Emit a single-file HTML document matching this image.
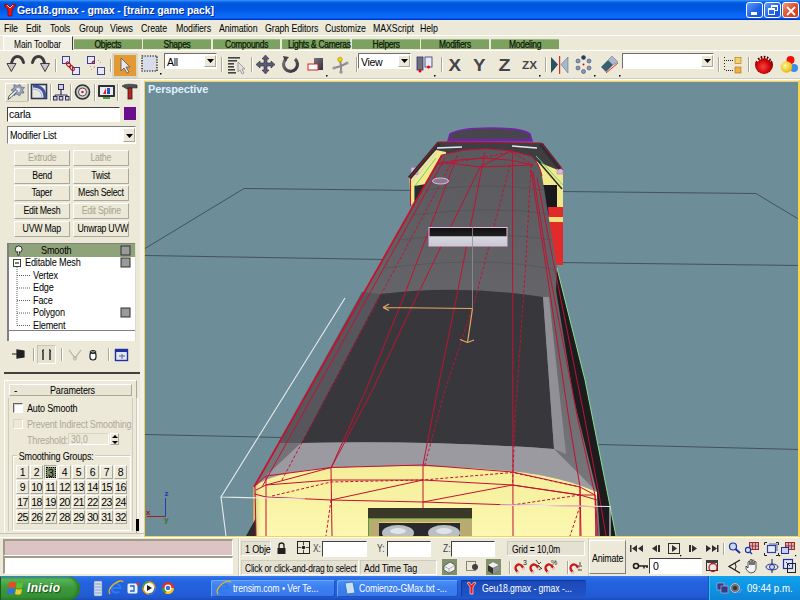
<!DOCTYPE html>
<html><head><meta charset="utf-8">
<style>
*{margin:0;padding:0;box-sizing:border-box}
html,body{width:800px;height:600px;overflow:hidden;background:#ECE9D8;font-family:"Liberation Sans",sans-serif;font-size:10px;color:#000}
.a{position:absolute;white-space:nowrap}
svg{position:absolute;overflow:visible}
#title{left:0;top:0;width:800px;height:20px;background:linear-gradient(#4A9CFF 0%,#1A78F4 5%,#0058DE 15%,#0056E0 45%,#0866F4 72%,#0A6EFA 88%,#0040D8 95%,#0030C0 100%)}
#ttxt{left:17px;top:4px;color:#fff;font-weight:bold;font-size:10.5px;letter-spacing:-0.1px;text-shadow:1px 1px 0 #0A2A90}
.tb{top:2px;width:17px;height:16px;border:1px solid #fff;border-radius:3px;background:linear-gradient(135deg,#5C9BFF,#1F5FE8 60%,#1A52D8)}
#menu div{position:absolute;top:22px;font-size:10.5px;letter-spacing:-0.1px;color:#000;white-space:nowrap;transform:scaleX(.84);transform-origin:0 0}
.tab{position:absolute;white-space:nowrap;top:39px;height:10px;background:#7DA161;color:#0A1806;-webkit-text-stroke:0.25px #0A1806;font-size:10px;letter-spacing:-0.3px;text-align:center;line-height:10px;border-top:1px solid #9CBB83}
.sep{position:absolute;width:2px;border-left:1px solid #ACA899;border-right:1px solid #fff}
.btn{position:absolute;white-space:nowrap;background:#ECE9D8;border:1px solid;border-color:#fff #ACA899 #ACA899 #fff;text-align:center;font-size:10px;letter-spacing:-0.3px}
.field{position:absolute;background:#fff;border:1px solid;border-color:#716F64 #fff #fff #716F64}
</style></head><body>
<!-- TITLE BAR -->
<div id="title" class="a"></div>
<svg style="left:3px;top:3px" width="14" height="14" viewBox="0 0 14 14"><path d="M1,2 L4,1 L7,4 L10,1 L13,2 L9,7 L9,13 L5,13 L5,7 Z" fill="#F01010" stroke="#600" stroke-width="0.6"/><path d="M4,2 L7,5 L10,2" fill="none" stroke="#fff" stroke-width="0.8"/></svg>
<div id="ttxt" class="a">Geu18.gmax - gmax - [trainz game pack]</div>
<div class="a tb" style="left:746px"><div class="a" style="left:4px;top:9px;width:6px;height:3px;background:#fff"></div></div>
<div class="a tb" style="left:764px"><div class="a" style="left:6px;top:2px;width:7px;height:6px;border:1px solid #fff;border-top-width:2px"></div><div class="a" style="left:3px;top:5px;width:7px;height:7px;border:1px solid #fff;border-top-width:2px;background:#2A6AF0"></div></div>
<div class="a tb" style="left:782px;background:linear-gradient(135deg,#F29A80,#E0502E 50%,#C83A1A)"><svg style="left:3px;top:3px" width="10" height="10"><path d="M1,1 L9,9 M9,1 L1,9" stroke="#fff" stroke-width="1.8"/></svg></div>

<!-- MENU -->
<div id="menu">
<div style="left:4px">File</div><div style="left:26px">Edit</div><div style="left:50px">Tools</div><div style="left:79px">Group</div><div style="left:110px">Views</div><div style="left:141px">Create</div><div style="left:176px">Modifiers</div><div style="left:219px">Animation</div><div style="left:265px">Graph Editors</div><div style="left:325px">Customize</div><div style="left:373px">MAXScript</div><div style="left:420px">Help</div>
</div>
<div class="a" style="left:0;top:35px;width:800px;height:1px;background:#fff"></div>


<!-- TABS -->
<div class="a" style="left:3px;top:36px;width:70px;height:15px;background:#F2F0E4;border:1px solid #fff;border-right:1px solid #404040;border-bottom:none"></div>
<div class="a" style="left:14px;top:38px;font-size:10.5px;letter-spacing:-0.1px;transform:scaleX(.8);transform-origin:0 0">Main Toolbar</div>
<div class="tab" style="left:74px;width:68px"><span style="display:inline-block;transform:scaleX(.84)">Objects</span></div>
<div class="tab" style="left:143px;width:68px"><span style="display:inline-block;transform:scaleX(.84)">Shapes</span></div>
<div class="tab" style="left:213px;width:67px"><span style="display:inline-block;transform:scaleX(.84)">Compounds</span></div>
<div class="tab" style="left:282px;width:68px"><span style="display:inline-block;transform:scaleX(.84)">Lights &amp; Cameras</span></div>
<div class="tab" style="left:352px;width:68px"><span style="display:inline-block;transform:scaleX(.84)">Helpers</span></div>
<div class="tab" style="left:421px;width:68px"><span style="display:inline-block;transform:scaleX(.84)">Modifiers</span></div>
<div class="tab" style="left:491px;width:68px"><span style="display:inline-block;transform:scaleX(.84)">Modeling</span></div>
<div class="a" style="left:0;top:50px;width:800px;height:1px;background:#fff"></div>
<div class="a" style="left:0;top:78px;width:800px;height:1px;background:#D0CCBA"></div>
<div class="a" style="left:0;top:79px;width:800px;height:1px;background:#fff"></div>
<!--TOOLBAR-->
<svg style="left:0;top:50px" width="800" height="30" viewBox="0 50 800 30">
<defs>
<linearGradient id="gArr" x1="0" y1="0" x2="0" y2="1"><stop offset="0" stop-color="#5A5A5A"/><stop offset="0.5" stop-color="#9A9A9A"/><stop offset="1" stop-color="#C8C8C8"/></linearGradient>
<linearGradient id="gMet" x1="0" y1="0" x2="1" y2="1"><stop offset="0" stop-color="#7A7A80"/><stop offset="1" stop-color="#2E2E34"/></linearGradient>
<radialGradient id="gRed" cx="0.45" cy="0.6" r="0.6"><stop offset="0" stop-color="#FF4040"/><stop offset="0.7" stop-color="#C00000"/><stop offset="1" stop-color="#700000"/></radialGradient>
<radialGradient id="gYel" cx="0.4" cy="0.4" r="0.6"><stop offset="0" stop-color="#FFF8A0"/><stop offset="1" stop-color="#E8B800"/></radialGradient>
</defs>
<!-- undo -->
<path d="M23.5,62.5 Q22,56.5 17.5,56.5 Q13,56.5 11.5,63" fill="none" stroke="#3A3A40" stroke-width="3" stroke-linecap="round"/>
<path d="M7,63.5 L16,63.5 L11.3,71.5 Z" fill="#C8C8CC" stroke="#3A3A40" stroke-width="1"/>
<!-- redo -->
<path d="M32.5,62.5 Q34,56.5 38.5,56.5 Q43,56.5 44.5,63" fill="none" stroke="#3A3A40" stroke-width="3" stroke-linecap="round"/>
<path d="M40.5,63.5 L49.5,63.5 L45,71.5 Z" fill="#C8C8CC" stroke="#3A3A40" stroke-width="1"/>
<rect x="55" y="59" width="1" height="13" fill="#ACA899"/><rect x="56" y="59" width="1" height="13" fill="#fff"/>
<!-- link -->
<rect x="62.5" y="56.5" width="7" height="7" fill="#E8E8F8" stroke="#404090" stroke-width="1"/><rect x="72.5" y="67.5" width="7" height="7" fill="#E8E8F8" stroke="#404090" stroke-width="1"/>
<ellipse cx="68.5" cy="64.5" rx="3" ry="1.6" transform="rotate(50 68.5 64.5)" fill="none" stroke="#C01020" stroke-width="1.1"/><ellipse cx="72" cy="68" rx="3" ry="1.6" transform="rotate(50 72 68)" fill="none" stroke="#C01020" stroke-width="1.1"/>
<!-- unlink -->
<rect x="87.5" y="56.5" width="7" height="7" fill="#E8E8F8" stroke="#404090" stroke-width="1"/><rect x="97.5" y="67.5" width="7" height="7" fill="#E8E8F8" stroke="#404090" stroke-width="1"/>
<path d="M92,63 Q93,61.5 94.5,61" stroke="#C01020" stroke-width="1.4" fill="none"/>
<path d="M98,61 L99,60 M100,62 L101,62.5 M90,67 L91,66 M94,66 L94.5,68 M91,69 L92,70" stroke="#D08080" stroke-width="0.9"/>
<rect x="110" y="59" width="1" height="13" fill="#ACA899"/><rect x="111" y="59" width="1" height="13" fill="#fff"/>
<!-- select (pressed orange) -->
<rect x="113" y="54" width="24" height="23" fill="#ECE9D8" stroke="#C8C4B0"/>
<rect x="114" y="55" width="22" height="21" fill="#E39A36"/>
<path d="M121,58 L121,71 L124,68 L127,73 L129,72 L126,67 L130,67 Z" fill="#E8E8E8" stroke="#555" stroke-width="0.8"/>
<!-- region select -->
<rect x="142" y="56" width="15" height="15" fill="#D8DCEA" stroke="#000" stroke-width="1.2" stroke-dasharray="1.3,1.3"/>
<rect x="160" y="73" width="1.5" height="1.5" fill="#000"/>
<rect x="221" y="57" width="1" height="15" fill="#ACA899"/><rect x="222" y="57" width="1" height="15" fill="#fff"/>
<!-- select by name -->
<g fill="#444"><rect x="228" y="57" width="12" height="1.6"/><rect x="228" y="60" width="9" height="1.6"/><rect x="228" y="63" width="6" height="1.6"/><rect x="228" y="66" width="6" height="1.6"/><rect x="228" y="69" width="7" height="1.6"/><rect x="228" y="72" width="8" height="1.6"/></g>
<path d="M238,62 L238,72 L240,70 L242,74 L244,73 L242,69 L245,69 Z" fill="#E0E0E0" stroke="#777" stroke-width="0.6"/>
<rect x="251" y="57" width="1" height="15" fill="#ACA899"/><rect x="252" y="57" width="1" height="15" fill="#fff"/>
<!-- move -->
<path d="M265.5,55 L269,59 L267,59 L267,63 L271,63 L271,61 L275,64.5 L271,68 L271,66 L267,66 L267,70 L269,70 L265.5,74 L262,70 L264,70 L264,66 L260,66 L260,68 L256,64.5 L260,61 L260,63 L264,63 L264,59 L262,59 Z" fill="#5A5A70" stroke="#2A2A40" stroke-width="0.6"/>
<!-- rotate -->
<path d="M286,59 A7,7 0 1 0 295,59" fill="none" stroke="url(#gMet)" stroke-width="3.2"/><path d="M283,56 L289,57 L285,62 Z" fill="#444"/>
<!-- scale -->
<rect x="314" y="58" width="9" height="12" fill="url(#gMet)"/><rect x="308" y="64" width="10" height="6" fill="#fff" stroke="#D02020"/>
<rect x="326" y="75" width="1.5" height="1.5" fill="#000"/>
<!-- pivot -->
<path d="M341,66 L340,60 M341,66 L334,68 M341,66 L347,63 M341,66 L341,72" stroke="#8A8A90" stroke-width="2"/><circle cx="340" cy="59.5" r="2.3" fill="#F0D000" stroke="#A08000" stroke-width="0.5"/><circle cx="341" cy="72" r="1.8" fill="#9A9AA0"/><circle cx="334" cy="68" r="1.6" fill="#9A9AA0"/><circle cx="347" cy="63" r="1.6" fill="#9A9AA0"/>
<rect x="356" y="57" width="1" height="15" fill="#ACA899"/><rect x="357" y="57" width="1" height="15" fill="#fff"/>
<!-- pivot center -->
<rect x="417" y="57" width="6" height="13" fill="#707078" stroke="#303080" stroke-width="0.8"/><rect x="425" y="57" width="7" height="10" fill="#E8E8F0" stroke="#303080" stroke-width="0.8"/>
<circle cx="420" cy="71" r="1.5" fill="#F00000"/><circle cx="428.5" cy="67" r="1.5" fill="#F00000"/>
<rect x="434" y="75" width="1.5" height="1.5" fill="#000"/>
<rect x="441" y="57" width="1" height="15" fill="#ACA899"/><rect x="442" y="57" width="1" height="15" fill="#fff"/>
<!-- X Y Z ZX -->
<text x="448.5" y="71" font-family="Liberation Sans" font-weight="bold" font-size="17" fill="#44444C" textLength="12.5" lengthAdjust="spacingAndGlyphs">X</text>
<text x="473" y="71" font-family="Liberation Sans" font-weight="bold" font-size="17" fill="#44444C" textLength="12.5" lengthAdjust="spacingAndGlyphs">Y</text>
<text x="498.5" y="71" font-family="Liberation Sans" font-weight="bold" font-size="17" fill="#44444C" textLength="12" lengthAdjust="spacingAndGlyphs">Z</text>
<text x="522" y="68.5" font-family="Liberation Sans" font-weight="bold" font-size="10.5" fill="#44444C" textLength="15" lengthAdjust="spacingAndGlyphs">ZX</text>
<rect x="539" y="75" width="1.5" height="1.5" fill="#000"/>
<rect x="545" y="57" width="1" height="15" fill="#ACA899"/><rect x="546" y="57" width="1" height="15" fill="#fff"/>
<!-- mirror -->
<path d="M551,57 L558,64.5 L551,73 Z" fill="#2A5060"/><path d="M568,57 L561,64.5 L568,73 Z" fill="#A8B8C8" stroke="#506070" stroke-width="0.5"/><rect x="559" y="56" width="1.2" height="18" fill="#D03030"/>
<!-- array -->
<g fill="#8A98B8" stroke="#3A4A6A" stroke-width="0.6"><circle cx="583.5" cy="57.5" r="2" fill="#2A3A5A"/><circle cx="578" cy="61" r="2"/><circle cx="589" cy="61" r="2"/><circle cx="578" cy="68" r="2"/><circle cx="589" cy="68" r="2"/><circle cx="583.5" cy="71.5" r="2"/></g><circle cx="583.5" cy="64.5" r="1" fill="#E00000"/>
<rect x="594" y="75" width="1.5" height="1.5" fill="#000"/>
<!-- align -->
<path d="M601,67 L608,60 L613,65 L606,72 Z" fill="#3A6070"/><path d="M608,60 L612,56 L618,62 L613,65 Z" fill="#A8B8D0" stroke="#607080" stroke-width="0.5"/><path d="M606,73 L618,63" stroke="#E03030" stroke-width="1"/>
<rect x="619" y="75" width="1.5" height="1.5" fill="#000"/>
<rect x="718" y="57" width="1" height="15" fill="#ACA899"/><rect x="719" y="57" width="1" height="15" fill="#fff"/>
<!-- schematic -->
<g fill="#222"><rect x="724" y="57" width="1" height="1"/><rect x="724" y="60" width="1" height="1"/><rect x="726" y="60" width="1" height="1"/><rect x="728" y="60" width="1" height="1"/><rect x="730" y="60" width="1" height="1"/><rect x="732" y="60" width="1" height="1"/><rect x="724" y="63" width="1" height="1"/><rect x="724" y="66" width="1" height="1"/><rect x="724" y="69" width="1" height="1"/><rect x="726" y="70" width="1" height="1"/><rect x="728" y="70" width="1" height="1"/><rect x="730" y="70" width="1" height="1"/><rect x="732" y="70" width="1" height="1"/></g>
<rect x="735" y="57.5" width="6" height="6" fill="#F8D060" stroke="#A07020" stroke-width="0.6"/><rect x="735" y="67" width="6" height="6" fill="#F0B040" stroke="#A07020" stroke-width="0.6"/>
<rect x="748" y="57" width="1" height="15" fill="#ACA899"/><rect x="749" y="57" width="1" height="15" fill="#fff"/>
<!-- render ball -->
<circle cx="764" cy="65" r="9" fill="url(#gRed)"/><path d="M757,61 Q764,53 771,61" fill="none" stroke="#fff" stroke-width="2.4" stroke-dasharray="1.6,1.6"/><path d="M758,59 Q764,54 770,59" fill="none" stroke="#111" stroke-width="1.3" stroke-dasharray="1.6,1.6"/>
<!-- color balls -->
<circle cx="790.5" cy="60" r="4" fill="#F01010"/><circle cx="794" cy="68" r="4" fill="#3A8AF0"/><circle cx="786.5" cy="67" r="5.8" fill="url(#gYel)"/>
</svg>
<!-- dropdowns -->
<div class="field" style="left:164px;top:53px;width:53px;height:16px"><div class="a" style="left:2px;top:2px;font-size:10.5px;letter-spacing:-.3px">All</div></div>
<div class="btn" style="left:204px;top:55px;width:12px;height:12px"><svg style="left:2px;top:3px" width="7" height="4"><path d="M0,0 L7,0 L3.5,4 Z" fill="#000"/></svg></div>
<div class="field" style="left:358px;top:53px;width:53px;height:16px"><div class="a" style="left:2px;top:2px;font-size:10.5px;letter-spacing:-.3px">View</div></div>
<div class="btn" style="left:398px;top:55px;width:12px;height:12px"><svg style="left:2px;top:3px" width="7" height="4"><path d="M0,0 L7,0 L3.5,4 Z" fill="#000"/></svg></div>
<div class="field" style="left:622px;top:53px;width:92px;height:16px"></div>
<div class="btn" style="left:701px;top:55px;width:12px;height:12px"><svg style="left:2px;top:3px" width="7" height="4"><path d="M0,0 L7,0 L3.5,4 Z" fill="#000"/></svg></div>

<!--PANEL-->
<div class="a" style="left:140px;top:80px;width:4px;height:458px;background:#F4F2E8"></div>
<div class="a" style="left:5px;top:83px;width:23px;height:19px;border:1px solid;border-color:#fff #C8C4B0 #C8C4B0 #fff;background:#E6E3D2"></div>
<div class="sep" style="left:28px;top:84px;height:17px"></div>
<div class="sep" style="left:50px;top:84px;height:17px"></div>
<div class="sep" style="left:70px;top:84px;height:17px"></div>
<div class="sep" style="left:94px;top:84px;height:17px"></div>
<div class="sep" style="left:117px;top:84px;height:17px"></div>
<svg style="left:0;top:80px" width="144" height="24" viewBox="0 80 144 24">
<!-- create wand -->
<path d="M14,84.5 L17,86 L20,84.5 L21,87 L24.5,87.5 L22.5,90 L24,93 L21,93 L19.5,96 L17,94 L14,95.5 L14,92 L11,90 L14,88 Z" fill="#9AA4B8" stroke="#5A6478" stroke-width="0.7"/>
<circle cx="18" cy="90" r="2" fill="#E8ECF0"/>
<path d="M8,99.5 L9,96 L16,89.5 L17.5,91 L11,97.5 Z" fill="#F0F0F4" stroke="#303848" stroke-width="0.8"/>
<!-- modify -->
<rect x="31.5" y="84.5" width="15" height="14" fill="#E8E8E0" stroke="#303850" stroke-width="1.6"/>
<path d="M33,86 Q45,86 45,98" fill="none" stroke="#4050A0" stroke-width="3"/><path d="M33,89 Q42,89 42,98" fill="none" stroke="#A0B0E0" stroke-width="1"/>
<!-- hierarchy -->
<rect x="58.5" y="84.5" width="5" height="5" fill="#D0D0E0" stroke="#303060"/><path d="M61,90 L61,95 M55,95 L67,95 M55,95 L55,97 M67,95 L67,97" stroke="#303060" stroke-width="1.2"/>
<rect x="53.5" y="96.5" width="3.5" height="3.5" fill="#D0D0E0" stroke="#303060"/><rect x="59.3" y="96.5" width="3.5" height="3.5" fill="#D0D0E0" stroke="#303060"/><rect x="65.5" y="96.5" width="3.5" height="3.5" fill="#D0D0E0" stroke="#303060"/>
<!-- motion -->
<circle cx="82.5" cy="92" r="7" fill="#C8C8C8" stroke="#303030" stroke-width="1.6"/><circle cx="82.5" cy="92" r="4" fill="#F0F0F0" stroke="#505050"/><circle cx="82.5" cy="92" r="1.3" fill="#E02020"/>
<!-- display -->
<rect x="98" y="85" width="17" height="12" rx="1" fill="#303030"/><rect x="100" y="87" width="13" height="8" fill="#E8ECF8"/><path d="M103,94 L106,88 L106,94 Z" fill="#E02020"/><rect x="107" y="88" width="3" height="6" fill="#3050C0"/><rect x="103" y="97" width="7" height="2" fill="#40A040"/>
<!-- utilities hammer -->
<path d="M122,86 Q126,83 137,85 L137,88 Q130,87 127,89 Z" fill="#505058" stroke="#202020" stroke-width="0.6"/><rect x="128" y="88" width="4" height="11" fill="#C02020" stroke="#202020" stroke-width="0.8"/>
</svg>
<div class="field" style="left:7px;top:107px;width:113px;height:15px;border-color:#404040 #fff #fff #404040"><div class="a" style="left:1px;top:0px;font-size:10.5px;letter-spacing:-.2px">carla</div></div>
<div class="a" style="left:124px;top:107px;width:12px;height:13px;background:#6A0E8E"></div>
<div class="field" style="left:7px;top:126px;width:129px;height:18px;border-color:#808080 #fff #fff #808080"><div class="a" style="left:2px;top:2px;font-size:10.5px;letter-spacing:-.2px;transform:scaleX(.86);transform-origin:0 0">Modifier List</div></div>
<div class="btn" style="left:123px;top:128px;width:12px;height:14px"><svg style="left:2px;top:5px" width="7" height="4"><path d="M0,0 L7,0 L3.5,4 Z" fill="#000"/></svg></div>
<div id="mods">
<div class="btn" style="left:14px;top:150px;width:56px;height:16px;line-height:14px;color:#A8A490"><span style="display:inline-block;transform:scaleX(.88)">Extrude</span></div>
<div class="btn" style="left:73px;top:150px;width:56px;height:16px;line-height:14px;color:#A8A490"><span style="display:inline-block;transform:scaleX(.88)">Lathe</span></div>
<div class="btn" style="left:14px;top:168px;width:56px;height:16px;line-height:14px"><span style="display:inline-block;transform:scaleX(.88)">Bend</span></div>
<div class="btn" style="left:73px;top:168px;width:56px;height:16px;line-height:14px"><span style="display:inline-block;transform:scaleX(.88)">Twist</span></div>
<div class="btn" style="left:14px;top:185px;width:56px;height:16px;line-height:14px"><span style="display:inline-block;transform:scaleX(.88)">Taper</span></div>
<div class="btn" style="left:73px;top:185px;width:56px;height:16px;line-height:14px"><span style="display:inline-block;transform:scaleX(.88)">Mesh Select</span></div>
<div class="btn" style="left:14px;top:203px;width:56px;height:16px;line-height:14px"><span style="display:inline-block;transform:scaleX(.88)">Edit Mesh</span></div>
<div class="btn" style="left:73px;top:203px;width:56px;height:16px;line-height:14px;color:#A8A490"><span style="display:inline-block;transform:scaleX(.88)">Edit Spline</span></div>
<div class="btn" style="left:14px;top:221px;width:56px;height:16px;line-height:14px"><span style="display:inline-block;transform:scaleX(.88)">UVW Map</span></div>
<div class="btn" style="left:73px;top:221px;width:56px;height:16px;line-height:14px"><span style="display:inline-block;transform:scaleX(.88)">Unwrap UVW</span></div>
</div>
<!-- stack -->
<div class="a" style="left:7px;top:243px;width:128px;height:98px;background:#fff;border-left:2px solid #808080;border-top:1px solid #808080"></div>
<div class="a" style="left:9px;top:244px;width:126px;height:13px;background:#8FA37A"></div>
<div class="a" style="left:9px;top:330px;width:126px;height:1px;background:#808080"></div>
<div class="a" style="left:135px;top:243px;width:1px;height:98px;background:#E0DCC8"></div>
<svg style="left:0;top:240px" width="144" height="100" viewBox="0 240 144 100">
<circle cx="18.7" cy="249.3" r="3.4" fill="#F4F4F0" stroke="#202020" stroke-width="0.9"/><path d="M18.5,251 L18.5,255.5" stroke="#202020" stroke-width="2"/><path d="M18.5,251 L18.5,254.5" stroke="#F4F4F0" stroke-width="0.8"/>
<rect x="121" y="246" width="9" height="9" fill="#9A9A9A" stroke="#303030" stroke-width="1"/>
<rect x="121" y="258" width="9" height="9" fill="#9A9A9A" stroke="#303030" stroke-width="1"/>
<rect x="121" y="308" width="9" height="9" fill="#9A9A9A" stroke="#303030" stroke-width="1"/>
<rect x="13.5" y="259.5" width="7" height="7" fill="#fff" stroke="#404040" stroke-width="1"/><path d="M15,263 L19,263" stroke="#000"/>
<path d="M17,267 L17,325.5 M17,275.5 L30,275.5 M17,288 L30,288 M17,300.5 L30,300.5 M17,313 L30,313 M17,325.5 L30,325.5" stroke="#606060" stroke-width="1" stroke-dasharray="1,1"/>
</svg>
<div class="a" style="left:41px;top:244px;font-size:10.5px;letter-spacing:-.2px;transform:scaleX(.87);transform-origin:0 0">Smooth</div>
<div class="a" style="left:25px;top:256px;font-size:10.5px;letter-spacing:-.2px;transform:scaleX(.87);transform-origin:0 0">Editable Mesh</div>
<div class="a" style="left:33px;top:269px;font-size:10.5px;letter-spacing:-.2px;transform:scaleX(.87);transform-origin:0 0">Vertex</div>
<div class="a" style="left:33px;top:281px;font-size:10.5px;letter-spacing:-.2px;transform:scaleX(.87);transform-origin:0 0">Edge</div>
<div class="a" style="left:33px;top:294px;font-size:10.5px;letter-spacing:-.2px;transform:scaleX(.87);transform-origin:0 0">Face</div>
<div class="a" style="left:33px;top:306px;font-size:10.5px;letter-spacing:-.2px;transform:scaleX(.87);transform-origin:0 0">Polygon</div>
<div class="a" style="left:33px;top:319px;font-size:10.5px;letter-spacing:-.2px;transform:scaleX(.87);transform-origin:0 0">Element</div>
<!-- stack icons -->
<div class="sep" style="left:33px;top:348px;height:13px"></div>
<div class="a" style="left:37px;top:345px;width:19px;height:19px;border:1px solid;border-color:#C8C4B0 #fff #fff #C8C4B0;background:#E4E1D0"></div>
<div class="sep" style="left:61px;top:348px;height:13px"></div>
<div class="sep" style="left:108px;top:348px;height:13px"></div>
<svg style="left:0;top:340px" width="144" height="30" viewBox="0 340 144 30">
<path d="M12,354 L17,354 M17,350 L17,358 L24,357 L24,351 Z" fill="#202020" stroke="#202020" stroke-width="1.2"/>
<path d="M44,350 Q42,350 43,352 L43,360 M49,350 Q51,350 50,352 L50,360" fill="none" stroke="#202020" stroke-width="1.4"/>
<path d="M69,350 L75,358 L81,350" fill="none" stroke="#B0B0A8" stroke-width="1.2"/><circle cx="75" cy="358.5" r="1.6" fill="none" stroke="#B0B0A8"/>
<rect x="90" y="352" width="6" height="8" rx="3" fill="#fff" stroke="#202020" stroke-width="1.2"/><ellipse cx="93" cy="352" rx="3" ry="1.5" fill="none" stroke="#202020"/>
<rect x="115.5" y="349.5" width="12" height="11" fill="#E0E8F8" stroke="#2030A0" stroke-width="1.4"/><rect x="115" y="349" width="13" height="3" fill="#2030A0"/><path d="M119,356 L125,356 M122,354 L122,359" stroke="#606080"/>
</svg>
<div class="a" style="left:4px;top:372px;width:136px;height:2px;background:#404040"></div>
<!-- rollout -->
<div class="a" style="left:4px;top:380px;width:133px;height:154px;border:1px solid;border-color:#fff #ACA899 #ACA899 #fff"></div>
<div class="a" style="left:9px;top:384px;width:123px;height:12px;border:1px solid;border-color:#fff #ACA899 #ACA899 #fff;background:#E8E5D4"></div>
<div class="a" style="left:14px;top:384px;font-size:10.5px">-</div>
<div class="a" style="left:50px;top:384px;font-size:10.5px;letter-spacing:-.2px;transform:scaleX(.86);transform-origin:0 0">Parameters</div>
<div class="a" style="left:8px;top:398px;width:1px;height:133px;background:#D0CCBA"></div>
<div class="a" style="left:132px;top:398px;width:1px;height:133px;background:#D0CCBA"></div>
<div class="field" style="left:13px;top:403px;width:10px;height:10px;border-color:#606060 #fff #fff #606060;background:#fff;box-shadow:inset 1px 1px 0 #D0D0D0"></div>
<div class="a" style="left:27px;top:402px;font-size:10.5px;letter-spacing:-.2px;transform:scaleX(.86);transform-origin:0 0">Auto Smooth</div>
<div class="field" style="left:13px;top:419px;width:10px;height:10px;border-color:#D8D4C4 #fff #fff #D8D4C4;background:#ECE9D8"></div>
<div class="a" style="left:27px;top:418px;font-size:10.5px;letter-spacing:-.2px;color:#ACA899;transform:scaleX(.86);transform-origin:0 0">Prevent Indirect Smoothing</div>
<div class="a" style="left:27px;top:434px;font-size:10.5px;letter-spacing:-.2px;color:#ACA899;transform:scaleX(.86);transform-origin:0 0">Threshold:</div>
<div class="field" style="left:68px;top:433px;width:41px;height:12px;border-color:#D8D4C4 #fff #fff #D8D4C4;background:#ECE9D8"><div class="a" style="left:2px;top:0px;font-size:10px;color:#ACA899;transform:scaleX(.86);transform-origin:0 0">30,0</div></div>
<div class="btn" style="left:110px;top:433px;width:9px;height:12px"><svg style="left:1px;top:1px" width="6" height="9"><path d="M0,3 L3,0 L6,3 Z M0,6 L6,6 L3,9 Z" fill="#000"/></svg></div>
<div class="a" style="left:12px;top:455px;width:119px;height:76px;border:1px solid;border-color:#D0CCBA #fff #fff #D0CCBA;box-shadow:inset 1px 1px 0 #fff"></div>
<div class="a" style="left:17px;top:450px;padding:0 2px;background:#ECE9D8;font-size:10.5px;letter-spacing:-.2px;transform:scaleX(.86);transform-origin:0 0">Smoothing Groups:</div>
<div id="sg"><div class="btn" style="left:16px;top:465px;width:13px;height:14px;line-height:13px;font-size:10.5px;letter-spacing:-.5px">1</div><div class="btn" style="left:30px;top:465px;width:13px;height:14px;line-height:13px;font-size:10.5px;letter-spacing:-.5px">2</div><div class="a" style="left:44px;top:465px;width:13px;height:14px;border:1px solid;border-color:#ACA899 #fff #fff #ACA899;background:#E4E1D0"><div class="a" style="left:1px;top:1px;width:10px;height:11px;background:#7D8F6A;border:1px dotted #000"></div><div class="a" style="left:0;top:1px;width:12px;text-align:center;font-size:10.5px">3</div></div><div class="btn" style="left:58px;top:465px;width:13px;height:14px;line-height:13px;font-size:10.5px;letter-spacing:-.5px">4</div><div class="btn" style="left:72px;top:465px;width:13px;height:14px;line-height:13px;font-size:10.5px;letter-spacing:-.5px">5</div><div class="btn" style="left:86px;top:465px;width:13px;height:14px;line-height:13px;font-size:10.5px;letter-spacing:-.5px">6</div><div class="btn" style="left:100px;top:465px;width:13px;height:14px;line-height:13px;font-size:10.5px;letter-spacing:-.5px">7</div><div class="btn" style="left:114px;top:465px;width:13px;height:14px;line-height:13px;font-size:10.5px;letter-spacing:-.5px">8</div><div class="btn" style="left:16px;top:480px;width:13px;height:14px;line-height:13px;font-size:10.5px;letter-spacing:-.5px">9</div><div class="btn" style="left:30px;top:480px;width:13px;height:14px;line-height:13px;font-size:10.5px;letter-spacing:-.5px">10</div><div class="btn" style="left:44px;top:480px;width:13px;height:14px;line-height:13px;font-size:10.5px;letter-spacing:-.5px">11</div><div class="btn" style="left:58px;top:480px;width:13px;height:14px;line-height:13px;font-size:10.5px;letter-spacing:-.5px">12</div><div class="btn" style="left:72px;top:480px;width:13px;height:14px;line-height:13px;font-size:10.5px;letter-spacing:-.5px">13</div><div class="btn" style="left:86px;top:480px;width:13px;height:14px;line-height:13px;font-size:10.5px;letter-spacing:-.5px">14</div><div class="btn" style="left:100px;top:480px;width:13px;height:14px;line-height:13px;font-size:10.5px;letter-spacing:-.5px">15</div><div class="btn" style="left:114px;top:480px;width:13px;height:14px;line-height:13px;font-size:10.5px;letter-spacing:-.5px">16</div><div class="btn" style="left:16px;top:495px;width:13px;height:14px;line-height:13px;font-size:10.5px;letter-spacing:-.5px">17</div><div class="btn" style="left:30px;top:495px;width:13px;height:14px;line-height:13px;font-size:10.5px;letter-spacing:-.5px">18</div><div class="btn" style="left:44px;top:495px;width:13px;height:14px;line-height:13px;font-size:10.5px;letter-spacing:-.5px">19</div><div class="btn" style="left:58px;top:495px;width:13px;height:14px;line-height:13px;font-size:10.5px;letter-spacing:-.5px">20</div><div class="btn" style="left:72px;top:495px;width:13px;height:14px;line-height:13px;font-size:10.5px;letter-spacing:-.5px">21</div><div class="btn" style="left:86px;top:495px;width:13px;height:14px;line-height:13px;font-size:10.5px;letter-spacing:-.5px">22</div><div class="btn" style="left:100px;top:495px;width:13px;height:14px;line-height:13px;font-size:10.5px;letter-spacing:-.5px">23</div><div class="btn" style="left:114px;top:495px;width:13px;height:14px;line-height:13px;font-size:10.5px;letter-spacing:-.5px">24</div><div class="btn" style="left:16px;top:510px;width:13px;height:14px;line-height:13px;font-size:10.5px;letter-spacing:-.5px">25</div><div class="btn" style="left:30px;top:510px;width:13px;height:14px;line-height:13px;font-size:10.5px;letter-spacing:-.5px">26</div><div class="btn" style="left:44px;top:510px;width:13px;height:14px;line-height:13px;font-size:10.5px;letter-spacing:-.5px">27</div><div class="btn" style="left:58px;top:510px;width:13px;height:14px;line-height:13px;font-size:10.5px;letter-spacing:-.5px">28</div><div class="btn" style="left:72px;top:510px;width:13px;height:14px;line-height:13px;font-size:10.5px;letter-spacing:-.5px">29</div><div class="btn" style="left:86px;top:510px;width:13px;height:14px;line-height:13px;font-size:10.5px;letter-spacing:-.5px">30</div><div class="btn" style="left:100px;top:510px;width:13px;height:14px;line-height:13px;font-size:10.5px;letter-spacing:-.5px">31</div><div class="btn" style="left:114px;top:510px;width:13px;height:14px;line-height:13px;font-size:10.5px;letter-spacing:-.5px">32</div></div>
<div class="a" style="left:136px;top:398px;width:3px;height:121px;background:#F8F6EE;border-left:1px solid #D0CCBA"></div>
<div class="a" style="left:136px;top:519px;width:3px;height:12px;background:#000"></div>
<div class="a" style="left:0;top:533px;width:144px;height:1px;background:#C8C4B0"></div>

<!--VIEWPORT-->
<div class="a" style="left:144px;top:81px;width:656px;height:456px;background:#F8D44C"></div>
<div class="a" style="left:145px;top:82px;width:653px;height:454px;background:#6D8D98;overflow:hidden">
<svg style="left:0;top:0" width="653" height="454" viewBox="145 82 653 454">
<defs>
<linearGradient id="gYf" x1="0" y1="0" x2="0" y2="1"><stop offset="0" stop-color="#F4EE98"/><stop offset="1" stop-color="#FCF8B0"/></linearGradient>
<linearGradient id="gYl" x1="0" y1="0" x2="1" y2="0"><stop offset="0" stop-color="#B8B060"/><stop offset="1" stop-color="#F4EE98" stop-opacity="0"/></linearGradient>
<linearGradient id="gRoof" x1="0" y1="0" x2="0" y2="1"><stop offset="0" stop-color="#5A5A5E"/><stop offset="0.5" stop-color="#68686C"/><stop offset="1" stop-color="#7A7A80"/></linearGradient>
<linearGradient id="gBox" x1="0" y1="0" x2="0" y2="1"><stop offset="0" stop-color="#101010"/><stop offset="0.45" stop-color="#202020"/><stop offset="0.5" stop-color="#D8D8E0"/><stop offset="1" stop-color="#C8C8D0"/></linearGradient>
</defs>
<g stroke="#3E4C54" stroke-width="0.9" fill="none">
<path d="M145,248.5 L244,188.5 L420,190.5"/>
<path d="M560,191.5 L756,193.5 L800,220"/>
<path d="M145,255.5 L385,259.5"/>
<path d="M558,262.5 L800,265.5"/>
<path d="M145,434.5 L282,437.5"/>
<path d="M598,444.5 L800,449.5"/>
</g>
<!-- back loco -->
<path d="M409.5,178 L439,142 L541,143 L563,170 L563,265 L552,265 L531,156 L443,155 Z" fill="#3E3E42"/>
<path d="M448,141 L450,134 Q460,128 490,128 Q522,128 530,134 L532,141 Z" fill="#46464C" stroke="#7A20B0" stroke-width="1.6"/><path d="M450,139 L531,139" stroke="#7A20B0" stroke-width="1"/>
<path d="M409.5,178 L436,150 L446,152 L446,160 L410.5,206 Z" fill="#F2EA8A"/>
<path d="M412,182 L438,151" stroke="#D8D8C8" stroke-width="1.5"/>
<path d="M415,200 L415,186 L436,158" stroke="#60D080" stroke-width="1" fill="none"/>
<path d="M414.5,186 L426,184 L426,200 L414.5,204 Z" fill="#2A2A30"/><path d="M410.5,178 L410.5,206" stroke="#D01020" stroke-width="1"/>
<rect x="411" y="167.5" width="7" height="7" fill="#D8B8D8" stroke="#B080B0" stroke-width="0.6"/>
<path d="M409.5,178 L439,143" stroke="#2E2E32" stroke-width="4"/>
<path d="M533,160 L563,172 L563,207 L548,207 Z" fill="#F2EA8A"/>
<rect x="542" y="185" width="15" height="30" fill="#1A1A1E"/>
<path d="M548,207 L563,207 L563,265 L553,265 Z" fill="#E22A2A"/>
<rect x="548" y="217" width="15" height="5" fill="#F0E080"/>
<rect x="557" y="169" width="6" height="5" fill="#D8B8D8" stroke="#B080B0" stroke-width="0.6"/>
<path d="M536,156 L563,185" stroke="#60D080" stroke-width="1"/><path d="M538,161 L562,189" stroke="#2A2A2A" stroke-width="1.5"/>
<path d="M541,144 L560,168.5" stroke="#2E2E32" stroke-width="4"/>
<path d="M437,148 L462,147 M512,146 L537,148" stroke="#E8E8F0" stroke-width="1.5"/>
<path d="M438,142 L541,143 L563,170 M409.5,178 L439,142" stroke="#B01030" stroke-width="1" fill="none"/>
<!-- front roof main body -->
<path d="M442,155 Q486,142 531,156 Q539,162 542,176 L557,268 L585,380 L616,536 L254,536 L254,487 Z" fill="url(#gRoof)"/>
<g stroke="#4E4E54" stroke-width="0.8" fill="none" opacity="0.7">
<path d="M425,190 Q490,182 545,190"/><path d="M412,215 Q490,205 550,214"/><path d="M398,240 Q490,230 553,240"/><path d="M385,268 Q490,255 556,270"/>
</g>
<!-- light band/edges -->
<path d="M380,294 Q460,284 543,297 L554,449 Q430,440 301,443 Z" fill="#38383C"/>
<path d="M301,443 Q430,440 554,449 L597,492 Q560,476 511,471 Q420,463 332,468 Q270,472 254,487 Z" fill="#9A9AA0"/>
<path d="M362,292 L380,294 L301,443 L278,443 Z" fill="#56565C"/>
<path d="M543,297 L554,449 L566,454 L549,297 Z" fill="#909096"/>
<!-- dark right strip -->
<path d="M557,268 L585,380 L616,536 L600,536 L597,492 L574,400 L556,290 Z" fill="#1C1C1E"/>
<path d="M557,268 L585,380 L616,536" stroke="#8EE08E" stroke-width="1" fill="none"/>
<!-- yellow front -->
<path d="M254,487 Q270,472 332,468 Q420,463 511,471 Q560,476 597,492 L595,536 L253,536 Z" fill="url(#gYf)"/>
<path d="M253,487 L262,480 L262,536 L253,536 Z" fill="url(#gYl)"/><path d="M246,536 L256,518 L256,536 Z" fill="#2A2A2A"/>
<!-- headlight box -->
<rect x="368" y="508" width="104" height="28" fill="#B8AA70"/>
<rect x="368" y="508" width="104" height="10" fill="#3A3828"/>
<path d="M368,518.5 L472,518.5" stroke="#60A030" stroke-width="1"/>
<rect x="379" y="523" width="81" height="13" fill="#2A2A2E"/>
<ellipse cx="398" cy="533" rx="16" ry="8" fill="#B8C0C4"/><ellipse cx="444" cy="533" rx="16" ry="8" fill="#B8C0C4"/><ellipse cx="398" cy="531" rx="8" ry="3" fill="#E0E4E8"/><ellipse cx="444" cy="531" rx="8" ry="3" fill="#E0E4E8"/>
<path d="M368.5,518 L368.5,536" stroke="#50A030" stroke-width="1"/><path d="M379,522.5 L460,522.5" stroke="#E8D060" stroke-width="1"/>
<!-- wireframe -->
<g stroke="#C41032" stroke-width="1" fill="none">
<path d="M442,155 L254,487" stroke-width="1.8" stroke="#C8102E"/>
<path d="M445,158 L262,487"/>
<path d="M457.5,155 L402.5,300 L366,390 L331,468"/>
<path d="M480,167 L415,300 L372.5,390 L331,468"/>
<path d="M485,152 L456,300 L437.5,390 L423,465"/>
<path d="M512.5,150 L513,536"/>
<path d="M531,170 L545,260 L569,420 L580,487 L580,536"/>
<path d="M533,172 L547,260 L578,420 L595,495 L598,536"/>
<path d="M537,178 L553,260 L585,420 L600,500 L606,536"/>
<path d="M442,155 Q486,142 531,156 Q539,162 542,176"/>
<path d="M437,164 Q486,152 533,165"/>
<path d="M441,162 L480,167 L512.5,150 M480,167 L533,165"/>
<path d="M254.5,486.5 L266,476 L331,467.5 L423,465 L512.5,472 L580,487 L595,495"/>
<path d="M256,490 L266,485 L331,480 L423,480 L512.5,485 L580,495 L597,500"/>
<path d="M254.5,494 L266,497 L331,500 L423,502 L512.5,505 L580,506 L598,507"/>
<path d="M266,485 L331,467.5 M331,500 L423,480 M423,502 L512.5,485 L580,495 L595,495"/>
<path d="M255,487 L256,536 M266,476 L266,536 M331,467.5 L332,536 M423,465 L423,508 M580,487 L581,536 M595,495 L596,536"/>
</g>
<g stroke="#C41032" stroke-width="1" fill="none" stroke-dasharray="3,2">
<path d="M453,160 L330,390 L282,480"/>
<path d="M510,165 L475,300 L445,390 L424,468"/>
<path d="M531,165 L526,260 L515,420 L512.5,485"/>
<path d="M272,496 L331,482 L423,480 L512.5,472.5 L580,487"/>
<path d="M512.5,505 L580,495 M331,500 L326,536 M580,506 L570,536"/>
<path d="M441,165 L512,152 L533,165"/>
</g>
<!-- roof box & oval -->
<rect x="429" y="227.5" width="78" height="18.5" fill="url(#gBox)" stroke="#E8B8E8" stroke-width="1"/>
<ellipse cx="440.5" cy="181" rx="8" ry="3" fill="#8A7A8A" stroke="#E8B8E8" stroke-width="1"/>
<!-- gizmo -->
<path d="M472.5,227 L472.5,308" stroke="#909096" stroke-width="0.8"/>
<g stroke="#E8A868" stroke-width="1.2" fill="none">
<path d="M472.5,308.5 L383,307.5 M383,307.5 L389,304 M383,307.5 L389,310.5"/>
<path d="M472.5,308.5 L467.5,342.5 M467.5,342.5 L460,339.5 M467.5,342.5 L474,340"/>
</g>
<!-- bounding box (white) -->
<g stroke="#E8ECEC" stroke-width="1.1" fill="none">
<path d="M345,298 L221,497 L305,499"/>
<path d="M221,497 L226,536"/>
<path d="M500,505 L610,506.5 L610,536"/>
</g>
<!-- axis tripod -->
<path d="M165.5,498 L165.5,516.5" stroke="#2A3AB0" stroke-width="1"/><path d="M147,516.5 L165.5,516.5" stroke="#A02020" stroke-width="1"/>
<text x="164.5" y="496" font-family="Liberation Sans" font-weight="bold" font-size="8" fill="#2A3AB0">z</text>
<text x="146" y="514.5" font-family="Liberation Sans" font-weight="bold" font-size="8" fill="#A02020">x</text>
<text x="164" y="521.5" font-family="Liberation Sans" font-weight="bold" font-size="8" fill="#2A7A3A">y</text>
</svg>
<div class="a" style="left:3px;top:1px;color:#E0F0FF;font-weight:bold;font-size:11px;letter-spacing:-0.15px">Perspective</div>
</div>

<!--STATUS-->
<div class="a" style="left:0;top:538px;width:800px;height:38px;background:#ECE9D8"></div>
<div class="a" style="left:0;top:537px;width:800px;height:1px;background:#fff"></div>
<!-- maxscript listener -->
<div class="a" style="left:3px;top:539px;width:230px;height:17px;background:#DCC4C4;border:1px solid;border-color:#A09C88 #fff #fff #A09C88;border-width:2px 1px 1px 2px"></div>
<div class="a" style="left:3px;top:556px;width:230px;height:18px;background:#fff;border:1px solid;border-color:#A09C88 #fff #fff #A09C88;border-width:2px 1px 1px 2px"></div>
<div class="a" style="left:238px;top:538px;width:1px;height:38px;background:#D0CCBA"></div>
<div class="a" style="left:239px;top:538px;width:1px;height:38px;background:#fff"></div>
<div class="a" style="left:241px;top:541px;width:30px;height:15px;background:#E4E1D2;border:1px solid;border-color:#D0CCBA #fff #fff #D0CCBA"><div class="a" style="left:3px;top:1px;font-size:10.5px;letter-spacing:-.2px;transform:scaleX(.86);transform-origin:0 0;width:32px;overflow:hidden">1 Obje</div></div>
<svg style="left:0;top:538px" width="800" height="38" viewBox="0 538 800 38">
<!-- lock -->
<path d="M279,548 L279,545.5 A2.5,2.5 0 0 1 284,545.5 L284,548" fill="none" stroke="#202020" stroke-width="1.3"/><rect x="277.5" y="548" width="8" height="6" fill="#202020"/>
<!-- abs/offset icon -->
<rect x="297.5" y="541.5" width="12" height="12" fill="none" stroke="#202020" stroke-width="1"/><path d="M303.5,542 L303.5,545 M303.5,550 L303.5,553 M298,547.5 L301,547.5 M306,547.5 L309,547.5" stroke="#202020" stroke-width="0.8"/><circle cx="303.5" cy="547.5" r="1.8" fill="#202020"/>
<!-- icons row 2 -->
<rect x="442" y="559" width="15" height="16" fill="#7F926A"/>
<path d="M444,566 L450,562 L455,565 L455,570 L449,573 L444,570 Z" fill="#F0F0F0" stroke="#303030" stroke-width="0.6"/><path d="M444,566 L449,569 L455,565 M449,569 L449,573" stroke="#808080" stroke-width="0.6" fill="none"/>
<rect x="466.5" y="561.5" width="9" height="9" fill="none" stroke="#202020" stroke-width="1" stroke-dasharray="1,1"/><circle cx="475" cy="567" r="3" fill="#404040"/>
<rect x="486" y="559" width="15" height="16" fill="#7F926A"/>
<path d="M488,565 L493,562 L499,565 L499,571 L493,574 L488,571 Z" fill="#303030"/><path d="M488,565 L493,568 L499,565 L493,562 Z" fill="#F0F0F0"/><path d="M493,568 L493,574 L499,571 L499,565 Z" fill="#909090"/>
<rect x="509" y="561" width="1" height="13" fill="#ACA899"/><rect x="510" y="561" width="1" height="13" fill="#fff"/>
<g transform="rotate(-35 519 568)"><path d="M515.5,572 L515.5,568 A3.5,3.5 0 0 1 522.5,568 L522.5,572" fill="none" stroke="#C81818" stroke-width="2.3"/><path d="M514.4,571 L516.6,571 M521.4,571 L523.6,571" stroke="#E0E0E0" stroke-width="2"/></g><g transform="rotate(-35 534 568)"><path d="M530.5,572 L530.5,568 A3.5,3.5 0 0 1 537.5,568 L537.5,572" fill="none" stroke="#C81818" stroke-width="2.3"/><path d="M529.4,571 L531.6,571 M536.4,571 L538.6,571" stroke="#E0E0E0" stroke-width="2"/></g><g transform="rotate(-35 549 568)"><path d="M545.5,572 L545.5,568 A3.5,3.5 0 0 1 552.5,568 L552.5,572" fill="none" stroke="#C81818" stroke-width="2.3"/><path d="M544.4,571 L546.6,571 M551.4,571 L553.6,571" stroke="#E0E0E0" stroke-width="2"/></g><g transform="rotate(-35 574 568)"><path d="M570.5,572 L570.5,568 A3.5,3.5 0 0 1 577.5,568 L577.5,572" fill="none" stroke="#C81818" stroke-width="2.3"/><path d="M569.4,571 L571.6,571 M576.4,571 L578.6,571" stroke="#E0E0E0" stroke-width="2"/></g>
<text x="523" y="565" font-family="Liberation Sans" font-size="7" fill="#202020">3</text>
<path d="M536,560 L539,564 L541,562 M538,565 L542,569 M539,570 L542,568" stroke="#202020" stroke-width="0.8" fill="none"/>
<text x="551" y="565" font-family="Liberation Sans" font-size="7" fill="#202020">%</text>
<rect x="567" y="561" width="1" height="13" fill="#ACA899"/><rect x="568" y="561" width="1" height="13" fill="#fff"/>
<path d="M578,566 L582,566 M580,562 L580,565 M578,570 L582,570" stroke="#202020" stroke-width="0.8"/>
<!-- playback -->
<g fill="#303030">
<rect x="630" y="545" width="1.5" height="7"/><path d="M637,545 L632,548.5 L637,552 Z M643,545 L638,548.5 L643,552 Z"/>
<path d="M657,545 L652,548.5 L657,552 Z"/><rect x="658" y="545" width="2" height="7"/>
<path d="M672,545 L677,548.5 L672,552 Z"/>
<rect x="689" y="545" width="2" height="7"/><path d="M692,545 L697,548.5 L692,552 Z"/>
<path d="M706,545 L711,548.5 L706,552 Z M712,545 L717,548.5 L712,552 Z"/><rect x="717" y="545" width="1.5" height="7"/>
</g>
<rect x="668.5" y="543.5" width="11" height="10" fill="none" stroke="#303030" stroke-width="1"/>
<rect x="680" y="555" width="1.3" height="1.3" fill="#000"/>
<rect x="723" y="543" width="1" height="12" fill="#ACA899"/><rect x="724" y="543" width="1" height="12" fill="#fff"/>
<!-- zoom icons -->
<circle cx="733" cy="546.5" r="3.5" fill="#C8D8F0" stroke="#2030A0" stroke-width="1.2"/><path d="M735.5,549 L740,553" stroke="#2030A0" stroke-width="2"/>
<rect x="749.5" y="542.5" width="9" height="7" fill="#B8B8C0" stroke="#B02020" stroke-width="1"/><path d="M752.5,542.5 L752.5,549.5 M755.5,542.5 L755.5,549.5 M749.5,546 L758.5,546" stroke="#B02020" stroke-width="0.8"/><circle cx="748" cy="550" r="2.6" fill="#D8E4F8" stroke="#2030A0" stroke-width="1.1"/><path d="M750,552 L752,554" stroke="#2030A0" stroke-width="1.4"/>
<rect x="767.5" y="545.5" width="8" height="7" fill="#E8ECF8" stroke="#3040A0" stroke-width="1.2"/><path d="M769,544 L777,544 L777,551" fill="none" stroke="#3040A0" stroke-width="0.8"/><path d="M764.5,542.5 L764.5,545 M764.5,542.5 L767,542.5 M778.5,542.5 L778.5,545 M778.5,542.5 L776,542.5 M764.5,555.5 L764.5,553 M764.5,555.5 L767,555.5 M778.5,555.5 L778.5,553 M778.5,555.5 L776,555.5" stroke="#202020" stroke-width="1"/>
<rect x="785.5" y="542.5" width="9" height="7" fill="#B8B8C0" stroke="#B02020" stroke-width="1"/><path d="M788.5,542.5 L788.5,549.5 M791.5,542.5 L791.5,549.5 M785.5,546 L794.5,546" stroke="#B02020" stroke-width="0.8"/><rect x="781.5" y="547.5" width="7" height="6" fill="#C8D0F0" stroke="#2030A0" stroke-width="1"/>
<rect x="795" y="555" width="1.2" height="1.2" fill="#000"/><rect x="779" y="555" width="1.2" height="1.2" fill="#000"/>
<!-- key -->
<circle cx="636" cy="566" r="2.5" fill="none" stroke="#202020" stroke-width="1.6"/><path d="M638.5,566 L648,566 M644,566 L644,568.5 M647,566 L647,568" stroke="#202020" stroke-width="1.5"/>
<!-- time config -->
<rect x="706.5" y="560.5" width="11" height="10" fill="#E8E8E8" stroke="#303030" stroke-width="1"/><rect x="706" y="560" width="12" height="3" fill="#404040"/><circle cx="713" cy="567.5" r="4" fill="none" stroke="#C02020" stroke-width="1.3"/>
<!-- fov, pan, orbit, max -->
<path d="M740,560 L729,566.5 L740,573" fill="none" stroke="#202020" stroke-width="1.3"/><path d="M735,563 Q737,566.5 735,570" fill="none" stroke="#202020"/>
<path d="M746,566 L748,568 L748,562 Q749,560.5 750,562 L750,565 L750,560 Q751,558.5 752,560 L752,565 L752,560.5 Q753,559 754,560.5 L754,565 L754,562 Q755,560.5 756,562 L756,569 Q755,573 751,573 Q748,572.5 746,569 Z" fill="#F4F4F4" stroke="#303030" stroke-width="0.8"/>
<ellipse cx="772" cy="567" rx="6" ry="3" fill="none" stroke="#2030A0" stroke-width="1"/><path d="M772,559 L772,573" stroke="#202020" stroke-width="1"/><circle cx="772" cy="567" r="2.5" fill="#C8D8F0" stroke="#2030A0"/>
<rect x="783.5" y="559.5" width="9" height="9" fill="#E0E8F8" stroke="#2030A0" stroke-width="1.2"/><rect x="787.5" y="563.5" width="8" height="9" fill="none" stroke="#202020" stroke-width="1"/><path d="M786,562 L790,566" stroke="#2030A0"/>
</svg>
<div class="a" style="left:313px;top:542px;font-size:10.5px;color:#404040;transform:scaleX(.8);transform-origin:0 0">X:</div>
<div class="field" style="left:322px;top:541px;width:45px;height:16px;border-color:#404040 #fff #fff #404040"></div>
<div class="a" style="left:377px;top:542px;font-size:10.5px;color:#404040;transform:scaleX(.8);transform-origin:0 0">Y:</div>
<div class="field" style="left:387px;top:541px;width:44px;height:16px;border-color:#404040 #fff #fff #404040"></div>
<div class="a" style="left:443px;top:542px;font-size:10.5px;color:#404040;transform:scaleX(.8);transform-origin:0 0">Z:</div>
<div class="field" style="left:451px;top:541px;width:44px;height:16px;border-color:#404040 #fff #fff #404040"></div>
<div class="a" style="left:507px;top:541px;width:78px;height:15px;background:#E4E1D2;border:1px solid;border-color:#D0CCBA #fff #fff #D0CCBA"><div class="a" style="left:4px;top:1px;font-size:10.5px;letter-spacing:-.2px;transform:scaleX(.82);transform-origin:0 0">Grid = 10,0m</div></div>
<div class="a" style="left:241px;top:560px;width:118px;height:15px;background:#E4E1D2;border:1px solid;border-color:#D0CCBA #fff #fff #D0CCBA;overflow:hidden"><div class="a" style="left:3px;top:1px;font-size:10.5px;letter-spacing:-.2px;transform:scaleX(.8);transform-origin:0 0">Click or click-and-drag to select objects</div></div>
<div class="a" style="left:360px;top:560px;width:77px;height:15px;background:#E4E1D2;border:1px solid;border-color:#D0CCBA #fff #fff #D0CCBA"><div class="a" style="left:3px;top:1px;font-size:10.5px;letter-spacing:-.2px;transform:scaleX(.86);transform-origin:0 0">Add Time Tag</div></div>
<div class="a" style="left:588px;top:538px;width:1px;height:38px;background:#D0CCBA"></div>
<div class="btn" style="left:589px;top:540px;width:37px;height:34px;border-color:#fff #808080 #808080 #fff"><div class="a" style="left:2px;top:11px;font-size:10.5px;letter-spacing:-.2px;transform:scaleX(.84);transform-origin:0 0">Animate</div></div>
<div class="field" style="left:649px;top:558px;width:53px;height:16px;border-color:#404040 #fff #fff #404040"><div class="a" style="left:3px;top:1px;font-size:10.5px">0</div></div>

<!--TASKBAR-->
<div class="a" style="left:0;top:576px;width:800px;height:24px;background:linear-gradient(#3A80F0 0%,#2A6CE8 8%,#2462DC 30%,#235ED8 70%,#1F56CC 92%,#1A4CB8 100%)"></div>
<div class="a" style="left:0;top:577px;width:80px;height:23px;border-radius:0 11px 11px 0;background:linear-gradient(#4AA84A 0%,#56B456 12%,#3C9A3C 45%,#349034 85%,#2C7C2C 100%);box-shadow:inset 1px 0 0 #1E5A1E,inset -3px 0 3px #2A7A2A"></div>
<svg style="left:0;top:576px" width="800" height="24" viewBox="0 576 800 24">
<path d="M9,583 Q12,581 16,582.5 L15,588 Q12,586.5 8,588 Z" fill="#F04820"/>
<path d="M17,582.5 Q20,584 23,582.5 L22,588 Q19,589 16,588 Z" fill="#60C030"/>
<path d="M8,589 Q12,587.5 15,589 L14,594 Q11,592.5 7,594 Z" fill="#3070F0"/>
<path d="M16,589 Q19,590 22,589 L21,594 Q18,595.5 15,594 Z" fill="#F8C820"/>
<rect x="23" y="581" width="1" height="1" fill="none"/>
<!-- quick launch -->
<rect x="94" y="581" width="8" height="15" rx="1" fill="#D0DCF0" stroke="#6080B0" stroke-width="0.6"/><path d="M95,584 L101,584 M95,587 L101,587 M95,590 L101,590 M95,593 L101,593" stroke="#8090C0" stroke-width="0.8"/>
<path d="M111.5,588 L120.5,588 A4.5,4.5 0 1 0 119,591.5" fill="none" stroke="#2A7AF0" stroke-width="2.2"/><path d="M110,594 Q107,590 114,584 Q121,579 123,582" fill="none" stroke="#F0B020" stroke-width="1.3"/>
<rect x="127" y="583" width="11" height="11" rx="2" fill="#E8F0FF" stroke="#2060C0" stroke-width="1"/><path d="M130,586 L134,586 L134,591 L130,591" fill="none" stroke="#2060C0" stroke-width="1.3"/><circle cx="138" cy="584" r="1.5" fill="#E03020"/>
<circle cx="149" cy="588" r="6" fill="#F8F8F8" stroke="#F0A000" stroke-width="1.5"/><path d="M147,585 L152,588 L147,591 Z" fill="#202020"/><path d="M143,588 A6,6 0 0 1 149,582" fill="none" stroke="#40A040" stroke-width="1.5"/><path d="M155,588 A6,6 0 0 1 149,594" fill="none" stroke="#3070E0" stroke-width="1.5"/>
<circle cx="168" cy="588" r="6" fill="#E03020"/><path d="M168,588 L174,588 A6,6 0 0 1 165,593.2 Z" fill="#F8C820"/><path d="M168,588 L165,593.2 A6,6 0 0 1 162,588 Z" fill="#30A040"/><circle cx="168" cy="588" r="2.8" fill="#3070E0" stroke="#fff" stroke-width="1.2"/>
</svg>
<div class="a" style="left:27px;top:580px;color:#fff;font-weight:bold;font-style:italic;font-size:13px;letter-spacing:0.4px;text-shadow:1px 1px 1px #1A4A1A;transform:scaleX(.92);transform-origin:0 0">Inicio</div>
<!-- task buttons -->
<div class="a" style="left:211px;top:580px;width:124px;height:17px;border-radius:2px;background:linear-gradient(#4C90F8,#3C80F0 40%,#3878EC);box-shadow:inset 1px 1px 0 #6AA8FF,inset -1px -1px 0 #1E50C0"></div>
<div class="a" style="left:337px;top:580px;width:121px;height:17px;border-radius:2px;background:linear-gradient(#4C90F8,#3C80F0 40%,#3878EC);box-shadow:inset 1px 1px 0 #6AA8FF,inset -1px -1px 0 #1E50C0"></div>
<div class="a" style="left:461px;top:580px;width:125px;height:17px;border-radius:2px;background:linear-gradient(#1A48B8,#1E4EC0 50%,#2254C8);box-shadow:inset 1px 1px 0 #103890"></div>
<svg style="left:0;top:576px" width="800" height="24" viewBox="0 576 800 24">
<path d="M219.5,588.5 L228.5,588.5 A4.5,4.5 0 1 0 227,592" fill="none" stroke="#2A7AF0" stroke-width="2.2"/><path d="M218,594.5 Q215,590 222,584 Q229,579 231,582.5" fill="none" stroke="#F0B020" stroke-width="1.3"/>
<path d="M345,583 L353,582 L355,593 L347,594 Z" fill="#C8E0F0" stroke="#3070B0" stroke-width="0.8"/>
<path d="M467,583 L469,582 L471.5,585 L474,582 L476,583 L473,587 L473,594 L470,594 L470,587 Z" fill="#F01818" stroke="#fff" stroke-width="0.6"/>
</svg>
<div class="a" style="left:233px;top:582px;color:#fff;font-size:10.5px;letter-spacing:-.1px;transform:scaleX(.83);transform-origin:0 0">trensim.com • Ver Te...</div>
<div class="a" style="left:359px;top:582px;color:#fff;font-size:10.5px;letter-spacing:-.1px;transform:scaleX(.83);transform-origin:0 0">Comienzo-GMax.txt -...</div>
<div class="a" style="left:482px;top:582px;color:#fff;font-size:10.5px;letter-spacing:-.1px;transform:scaleX(.83);transform-origin:0 0">Geu18.gmax - gmax -...</div>
<!-- tray -->
<div class="a" style="left:708px;top:576px;width:92px;height:24px;background:linear-gradient(#1CA0F0 0%,#10A0EC 10%,#0F90E0 60%,#0C84D8 100%);border-left:1px solid #0A60B0;box-shadow:inset 1px 0 0 #40B8FF"></div>
<svg style="left:0;top:576px" width="800" height="24" viewBox="0 576 800 24">
<rect x="717" y="583" width="7" height="7" fill="#3A3A80" stroke="#C0C0E0" stroke-width="0.6"/><rect x="721" y="586" width="7" height="7" fill="#3A3A80" stroke="#C0C0E0" stroke-width="0.6"/>
<circle cx="735" cy="588" r="4.5" fill="#707070" stroke="#D0D0D0" stroke-width="0.8"/><circle cx="735" cy="588" r="2" fill="#303030"/><path d="M739,593 L742,589" stroke="#9090E0" stroke-width="1"/>
</svg>
<div class="a" style="left:747px;top:582px;color:#fff;font-size:10.5px;letter-spacing:0px;transform:scaleX(.92);transform-origin:0 0">09:44 p.m.</div>

</body></html>
